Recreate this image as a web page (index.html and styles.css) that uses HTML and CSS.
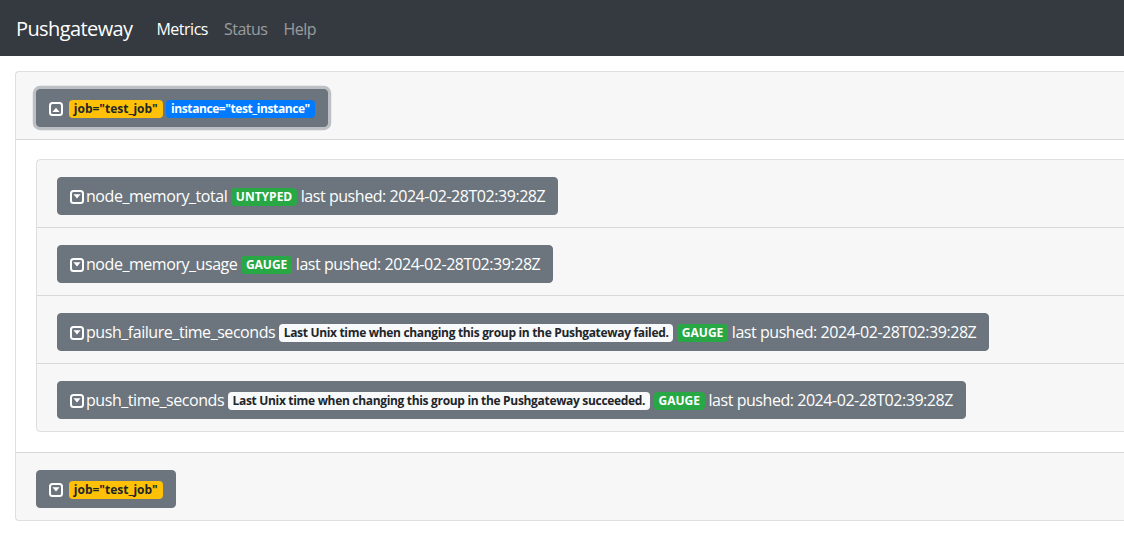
FILE: index.html
```html
<!DOCTYPE html>
<html lang="en">
<head>
<meta charset="utf-8">
<title>Pushgateway</title>
<link rel="stylesheet" href="styles.css">
</head>
<body>
<nav class="navbar">
  <a class="brand" href="#">Pushgateway</a>
  <ul class="nav">
    <li><a class="nav-link active" href="#">Metrics</a></li>
    <li><a class="nav-link" href="#">Status</a></li>
    <li><a class="nav-link" href="#">Help</a></li>
  </ul>
</nav>
<main class="main">
  <div class="card">
    <div class="card-header">
      <button class="btn btn-focus"><svg class="icon icon-gap" viewBox="0 0 14 14" width="14" height="14"><rect x="1" y="1" width="12" height="12" rx="2.5" fill="none" stroke="#fff" stroke-width="2"/><path d="M3.4 10h7.2L7 5.8z" fill="#fff"/></svg><span class="badge badge-warning">job="test_job"</span> <span class="badge badge-primary">instance="test_instance"</span></button>
    </div>
    <div class="card-body">
      <div class="inner-card">
        <div class="metric-row">
          <button class="btn"><svg class="icon" viewBox="0 0 14 14" width="14" height="14"><rect x="1" y="1" width="12" height="12" rx="2.5" fill="none" stroke="#fff" stroke-width="2"/><path d="M3.4 4.2h7.2L7 8.4z" fill="#fff"/></svg>node_memory_total <span class="badge badge-success">UNTYPED</span> last pushed: 2024-02-28T02:39:28Z</button>
        </div>
        <div class="metric-row">
          <button class="btn"><svg class="icon" viewBox="0 0 14 14" width="14" height="14"><rect x="1" y="1" width="12" height="12" rx="2.5" fill="none" stroke="#fff" stroke-width="2"/><path d="M3.4 4.2h7.2L7 8.4z" fill="#fff"/></svg>node_memory_usage <span class="badge badge-success">GAUGE</span> last pushed: 2024-02-28T02:39:28Z</button>
        </div>
        <div class="metric-row">
          <button class="btn"><svg class="icon" viewBox="0 0 14 14" width="14" height="14"><rect x="1" y="1" width="12" height="12" rx="2.5" fill="none" stroke="#fff" stroke-width="2"/><path d="M3.4 4.2h7.2L7 8.4z" fill="#fff"/></svg>push_failure_time_seconds <span class="badge badge-light">Last Unix time when changing this group in the Pushgateway failed.</span> <span class="badge badge-success">GAUGE</span> last pushed: 2024-02-28T02:39:28Z</button>
        </div>
        <div class="metric-row">
          <button class="btn"><svg class="icon" viewBox="0 0 14 14" width="14" height="14"><rect x="1" y="1" width="12" height="12" rx="2.5" fill="none" stroke="#fff" stroke-width="2"/><path d="M3.4 4.2h7.2L7 8.4z" fill="#fff"/></svg>push_time_seconds <span class="badge badge-light">Last Unix time when changing this group in the Pushgateway succeeded.</span> <span class="badge badge-success">GAUGE</span> last pushed: 2024-02-28T02:39:28Z</button>
        </div>
      </div>
    </div>
    <div class="card-header card-header-top">
      <button class="btn"><svg class="icon icon-gap" viewBox="0 0 14 14" width="14" height="14"><rect x="1" y="1" width="12" height="12" rx="2.5" fill="none" stroke="#fff" stroke-width="2"/><path d="M3.4 4.2h7.2L7 8.4z" fill="#fff"/></svg><span class="badge badge-warning">job="test_job"</span></button>
    </div>
  </div>
</main>
</body>
</html>
```
FILE: styles.css
```css
html, body {
  margin: 0;
  padding: 0;
  overflow: hidden;
  background: #fff;
}
body {
  font-family: "Open Sans", "Noto Sans", Arial, sans-serif;
  font-size: 16px;
  line-height: 1.5;
  color: #212529;
}
.navbar {
  display: flex;
  align-items: center;
  background: #343a40;
  padding: 8px 16px;
  height: 40px;
}
.brand {
  color: #fff;
  font-size: 20px;
  line-height: 30px;
  padding: 6px 0 4px;
  margin-right: 16px;
  letter-spacing: -0.6px;
  text-decoration: none;
}
.nav {
  display: flex;
  list-style: none;
  margin: 0;
  padding: 0;
}
.nav-link {
  display: block;
  padding: 9px 8px 7px;
  color: rgba(255, 255, 255, 0.5);
  letter-spacing: -0.5px;
  text-decoration: none;
}
.nav-link.active {
  color: #fff;
}
.main {
  padding: 15px 0 0 15px;
}
.card {
  width: 1200px;
  border: 1px solid rgba(0, 0, 0, 0.125);
  border-radius: 4px;
  background: #fff;
}
.card-header {
  background: rgba(0, 0, 0, 0.03);
  padding: 17px 20px 12px;
  border-bottom: 1px solid rgba(0, 0, 0, 0.125);
}
.card-header-top {
  border-bottom: 0;
  border-top: 1px solid rgba(0, 0, 0, 0.125);
}
.card-body {
  padding: 19px 20px 20px;
}
.inner-card {
  border: 1px solid rgba(0, 0, 0, 0.125);
  border-radius: 4px;
}
.metric-row {
  background: rgba(0, 0, 0, 0.03);
  padding: 17px 20px 12px;
  border-bottom: 1px solid rgba(0, 0, 0, 0.125);
}
.metric-row:last-child {
  border-bottom: 0;
}
.btn {
  display: inline-block;
  box-sizing: border-box;
  height: 38px;
  white-space: nowrap;
  font-family: inherit;
  font-size: 16px;
  line-height: 24px;
  letter-spacing: -0.45px;
  color: #fff;
  background: #6c757d;
  border: 1px solid #6c757d;
  border-radius: 4px;
  padding: 6px 12px;
  vertical-align: middle;
  cursor: pointer;
}
.btn-focus {
  box-shadow: 0 0 0 3.2px rgba(130, 138, 145, 0.5);
}
.icon {
  display: inline-block;
  width: 14px;
  height: 14px;
  margin-right: 2px;
  vertical-align: -2px;
}
.icon-gap {
  margin-right: 6px;
}
.badge {
  display: inline-block;
  font-size: 12px;
  font-weight: 700;
  line-height: 1;
  letter-spacing: 0;
  padding: 3px 4.8px;
  border-radius: 4px;
  white-space: nowrap;
  vertical-align: 1px;
}
.badge-warning {
  background: #ffc107;
  color: #212529;
}
.badge-primary {
  background: #007bff;
  color: #fff;
  letter-spacing: -0.42px;
}
.badge-success {
  background: #28a745;
  color: #fff;
}
.badge-light {
  background: #f8f9fa;
  color: #212529;
  letter-spacing: -0.32px;
}
```
